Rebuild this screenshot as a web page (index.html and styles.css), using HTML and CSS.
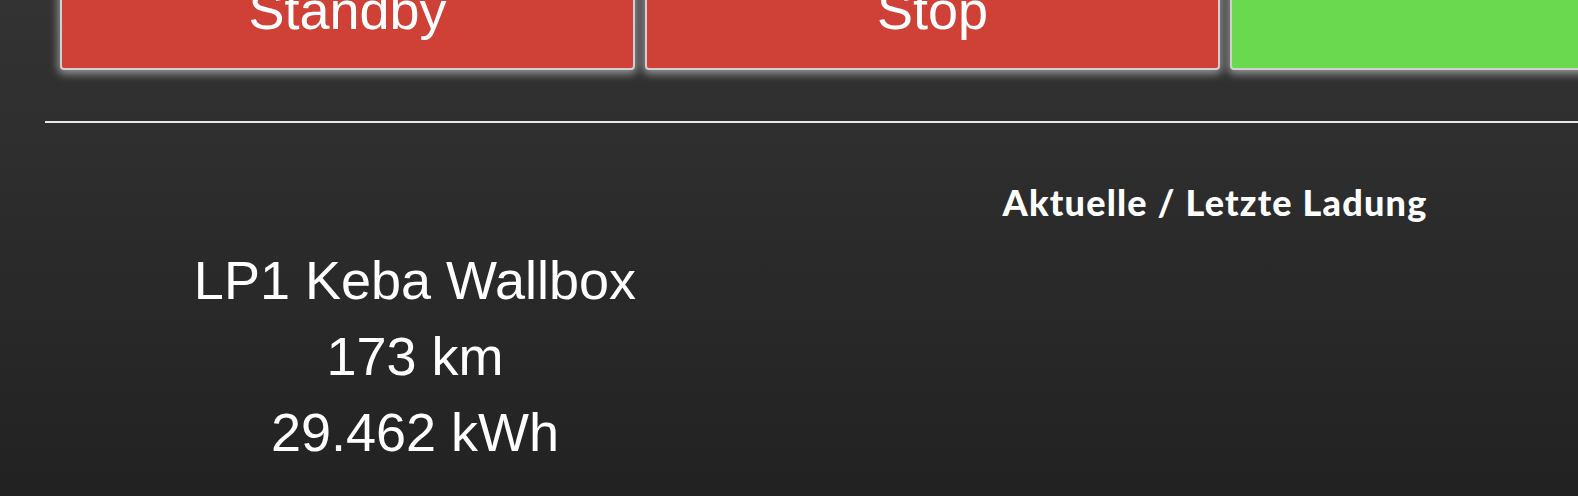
FILE: index.html
```html
<!DOCTYPE html>
<html lang="de">
  <head>
    <meta charset="UTF-8" />
    <meta name="viewport" content="width=device-width, initial-scale=1.0" />
    <title>Wallbox</title>
    <link rel="stylesheet" href="styles.css">
  </head>
  <body>
    <div class="page">
      <div class="controls">
        <button class="mode-btn off">Standby</button>
        <button class="mode-btn off">Stop</button>
        <button class="mode-btn on"></button>
      </div>
      <hr class="divider" />
      <div class="info">
        <div class="col-left">
          <div class="value">LP1 Keba Wallbox</div>
          <div class="value">173 km</div>
          <div class="value">29.462 kWh</div>
        </div>
        <div class="col-right">
          <h3 class="section-title">Aktuelle / Letzte Ladung</h3>
        </div>
      </div>
    </div>
  </body>
</html>
```

FILE: styles.css
```css
html,
body {
  margin: 0;
  height: 100%;
}
body {
  background: linear-gradient(#333333, #222222);
  color: white;
  font-family: "Liberation Sans", Arial, sans-serif;
  overflow: hidden;
}
.page {
  padding-left: 45px;
  width: 2400px;
}
.controls {
  display: flex;
  gap: 10px;
  padding-left: 15px;
  margin-top: -51px;
}
.mode-btn {
  width: 575px;
  height: 121px;
  border: 2px solid #d0d0d0;
  border-radius: 4px;
  color: white;
  font-family: "Liberation Sans", Arial, sans-serif;
  font-size: 54px;
  box-shadow: 0 2px 8px 2px rgba(190, 190, 190, 0.7);
  padding: 0;
}
.off {
  background-color: #cf4036;
}
.on {
  background-color: #6ad950;
}
.divider {
  margin: 51px 0 0 0;
  border: none;
  height: 2px;
  background-color: #e8e8e8;
}
.info {
  display: flex;
}
.col-left {
  width: 740px;
  padding-top: 119px;
  text-align: center;
}
.value {
  font-size: 54px;
  line-height: 76px;
}
.col-right {
  width: 860px;
  padding-top: 58px;
  text-align: center;
}
.section-title {
  margin: 0;
  font-family: Lato, sans-serif;
  font-weight: 900;
  font-size: 36px;
  line-height: 1.2;
  letter-spacing: 1.2px;
}
```
